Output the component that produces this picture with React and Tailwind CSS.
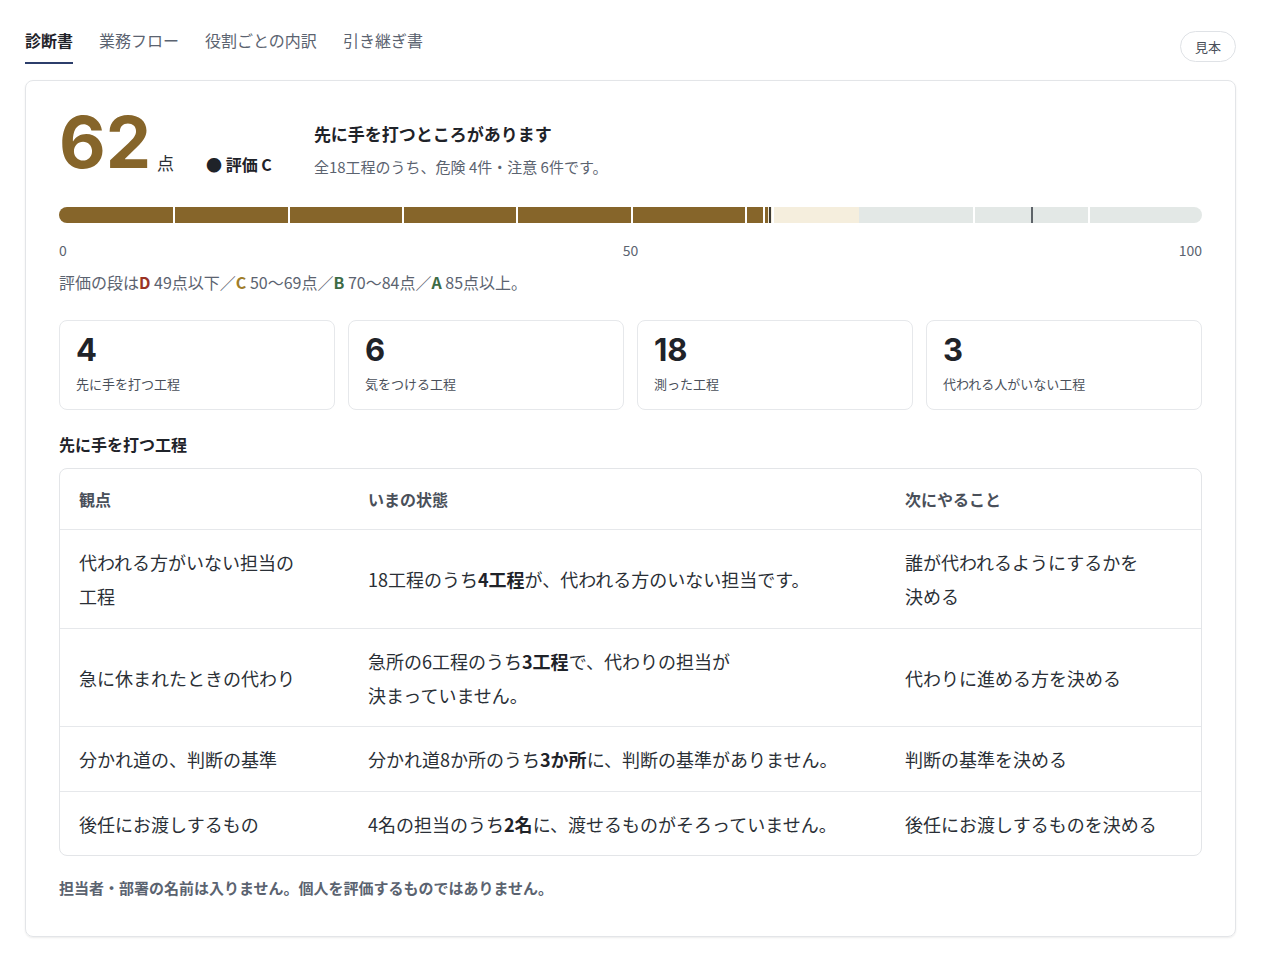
export default function App() {
  const font = { fontFamily: '"Noto Sans CJK JP", "Noto Sans", sans-serif' };
  const rows = [
    [<>代われる方がいない担当の<br/>工程</>, <>18工程のうち<b className="font-bold text-[#1f2329]">4工程</b>が、代われる方のいない担当です。</>, <>誰が代われるようにするかを<br/>決める</>, 'h-[99px]'],
    ['急に休まれたときの代わり', <>急所の6工程のうち<b className="font-bold text-[#1f2329]">3工程</b>で、代わりの担当が<br/>決まっていません。</>, '代わりに進める方を決める', 'h-[98px]'],
    ['分かれ道の、判断の基準', <>分かれ道8か所のうち<b className="font-bold text-[#1f2329]">3か所</b>に、判断の基準がありません。</>, '判断の基準を決める', 'h-[65px]'],
    ['後任にお渡しするもの', <>4名の担当のうち<b className="font-bold text-[#1f2329]">2名</b>に、渡せるものがそろっていません。</>, '後任にお渡しするものを決める', 'h-[64px]'],
  ];
  return (
    <div className="min-h-[955px] bg-white text-[#2a2f36]" style={font}>
      <div className="flex items-end justify-between px-[25px] pt-[28px]">
        <div className="flex gap-[26px] text-[16px]">
          <div className="font-bold text-[#1f2329] pb-[10px] border-b-2 border-[#2c3e6b]">診断書</div>
          <div className="text-[#5b6370] pb-[10px]">業務フロー</div>
          <div className="text-[#5b6370] pb-[10px]">役割ごとの内訳</div>
          <div className="text-[#5b6370] pb-[10px]">引き継ぎ書</div>
        </div>
        <div className="mb-[2px] rounded-full border border-[#dfe2e6] px-[14px] py-[5px] text-[13px] text-[#4a505a]">見本</div>
      </div>
      <div className="mx-[25px] mt-[16px] rounded-[8px] border border-[#e3e5e8] shadow-[0_1px_2px_rgba(0,0,0,0.08)] px-[33px] pt-[24px] pb-[36px]">
        <div className="flex items-end">
          <div className="text-[72px] leading-[74px] font-bold text-[#86652a]" style={{ fontFamily: 'Inter, sans-serif' }}>62</div>
          <div className="text-[17px] ml-[6px] mb-[4px] text-[#2a2f36]">点</div>
          <div className="ml-[32px] mb-[3px] text-[16px] font-bold text-[#1f2329]">● 評価 C</div>
          <div className="ml-[42px] mb-[1px]">
            <div className="text-[17px] font-bold text-[#1f2329]">先に手を打つところがあります</div>
            <div className="mt-[9px] text-[15px] text-[#5b6370]">全18工程のうち、危険 4件・注意 6件です。</div>
          </div>
        </div>
        <div className="relative mt-[28px] h-[16px] rounded-full overflow-hidden flex">
          <div className="h-full w-[62%] bg-[#86652a]" />
          <div className="h-full w-[8%] bg-[#f5eedd]" />
          <div className="h-full w-[30%] bg-[#e3e8e6]" />
          {[10,20,30,40,50,60,80,90].map(p => (
            <div key={p} className="absolute top-0 h-full w-[2px] bg-white" style={{ left: `${p}%` }} />
          ))}
          <div className="absolute top-0 h-full w-[2px] bg-white" style={{ left: '61.6%' }} />
          <div className="absolute top-0 h-full w-[2px] bg-[#3d3a33]" style={{ left: '62.1%' }} />
          <div className="absolute top-0 h-full w-[2px] bg-white" style={{ left: '62.4%' }} />
          <div className="absolute top-0 h-full w-[2px] bg-[#5d6368]" style={{ left: '85%' }} />
        </div>
        <div className="relative mt-[17px] h-[18px] text-[14px] text-[#5b6370]">
          <span className="absolute left-0">0</span>
          <span className="absolute left-1/2 -translate-x-1/2">50</span>
          <span className="absolute right-0">100</span>
        </div>
        <div className="mt-[12px] text-[16px] text-[#5b6370]">評価の段は<span className="text-[#9a3324] font-bold">D</span> 49点以下／<span className="text-[#a07d2a] font-bold">C</span> 50〜69点／<span className="text-[#3d6b45] font-bold">B</span> 70〜84点／<span className="text-[#3d6b45] font-bold">A</span> 85点以上。</div>
        <div className="mt-[26px] grid grid-cols-4 gap-[13px]">
          {[['4','先に手を打つ工程'],['6','気をつける工程'],['18','測った工程'],['3','代われる人がいない工程']].map(([n,l]) => (
            <div key={l} className="h-[90px] rounded-[8px] border border-[#e6e8eb] px-[16px] pt-[10px]">
              <div className="text-[31px] leading-[38px] font-bold text-[#1f2329]" style={{ fontFamily: 'Inter, sans-serif' }}>{n}</div>
              <div className="mt-[5px] text-[13px] text-[#4a505a]">{l}</div>
            </div>
          ))}
        </div>
        <div className="mt-[22px] text-[16px] font-bold text-[#1f2329]">先に手を打つ工程</div>
        <div className="mt-[12px] rounded-[8px] border border-[#e3e5e8] overflow-hidden">
          <div className="grid grid-cols-[289px_537px_1fr] h-[60px] items-center text-[16px] font-bold text-[#4a505a]">
            <div className="px-[19px]">観点</div><div className="px-[19px]">いまの状態</div><div className="px-[19px]">次にやること</div>
          </div>
          {rows.map((r, i) => (
            <div key={i} className={`grid grid-cols-[289px_537px_1fr] items-center border-t border-[#e6e8eb] text-[18px] leading-[34px] text-[#2a2f36] ${r[3]}`}>
              <div className="px-[19px]">{r[0]}</div><div className="px-[19px]">{r[1]}</div><div className="px-[19px]">{r[2]}</div>
            </div>
          ))}
        </div>
        <div className="mt-[21px] text-[15px] font-bold text-[#5b6370]">担当者・部署の名前は入りません。個人を評価するものではありません。</div>
      </div>
    </div>
  );
}
